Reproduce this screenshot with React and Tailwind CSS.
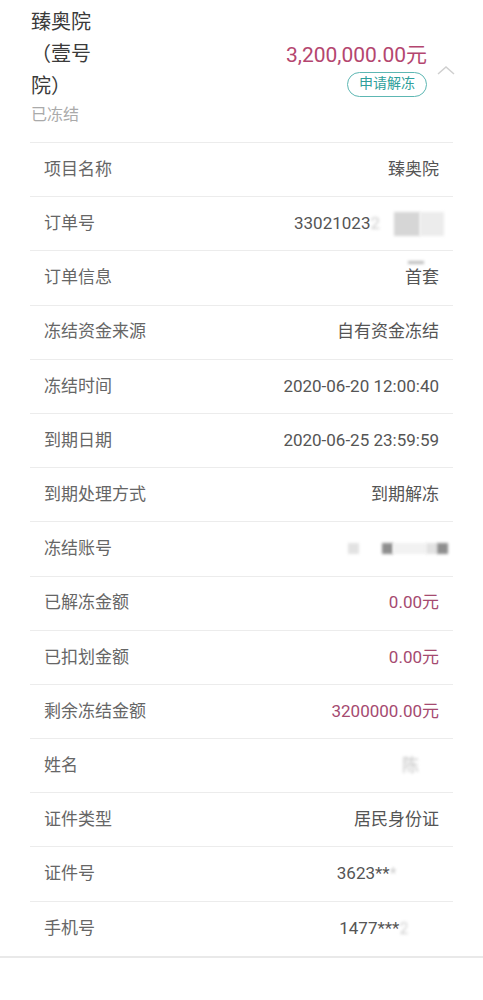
import React from "react";

const FONT = { fontFamily: 'Roboto, "Noto Sans CJK SC", sans-serif' };

function Blur({ className }) {
  return <span className={`inline-block blur-[1.5px] ${className}`} />;
}

const rows = [
  { label: "项目名称", value: "臻奥院" },
  {
    label: "订单号",
    value: (
      <span className="flex items-center">
        <span>33021023</span>
        <span className="text-[#ccc] blur-[1.5px]">2</span>
        <span className="ml-[14px] mr-[-5px] flex">
          <Blur className="w-[26px] h-[24px] bg-[#d6d6d6]" />
          <Blur className="w-[24px] h-[24px] bg-[#ececec]" />
        </span>
      </span>
    ),
  },
  {
    label: "订单信息",
    value: (
      <span className="relative">
        <Blur className="absolute left-[3px] -top-[6px] w-[16px] h-[3px] bg-[#bbb]" />
        首套
      </span>
    ),
  },
  { label: "冻结资金来源", value: "自有资金冻结" },
  { label: "冻结时间", value: "2020-06-20 12:00:40" },
  { label: "到期日期", value: "2020-06-25 23:59:59" },
  { label: "到期处理方式", value: "到期解冻" },
  {
    label: "冻结账号",
    value: (
      <span className="flex items-center mr-[-9px]">
        <Blur className="w-[11px] h-[11px] bg-[#e2e2e2]" />
        <Blur className="ml-[23px] w-[11px] h-[11px] bg-[#8e8e8e]" />
        <Blur className="w-[33px] h-[11px] bg-[#f2f2f2]" />
        <Blur className="w-[11px] h-[11px] bg-[#e2e2e2]" />
        <Blur className="w-[11px] h-[11px] bg-[#8e8e8e]" />
      </span>
    ),
  },
  { label: "已解冻金额", value: "0.00元", money: true },
  { label: "已扣划金额", value: "0.00元", money: true },
  { label: "剩余冻结金额", value: "3200000.00元", money: true },
  {
    label: "姓名",
    value: (
      <span className="flex items-center">
        <span className="text-[#c4c4c4] blur-[1.5px]">陈</span>
        <span className="w-[20px]" />
      </span>
    ),
  },
  { label: "证件类型", value: "居民身份证" },
  {
    label: "证件号",
    value: (
      <span className="flex items-center">
        <span>3623**</span>
        <span className="text-[#ccc] blur-[1px]">*</span>
        <span className="w-[42px] h-[20px] bg-white blur-[3px]" />
      </span>
    ),
  },
  {
    label: "手机号",
    value: (
      <span className="flex items-center">
        <span>1477***</span>
        <span className="text-[#ccc] blur-[1.5px]">2</span>
        <span className="w-[30px] h-[20px] bg-white blur-[3px]" />
      </span>
    ),
  },
];

export default function App() {
  return (
    <div className="min-h-[1000px] bg-white" style={FONT}>
      <div className="border-b-2 border-[#e9e9e9] px-[30px]">
        {/* Header */}
        <div className="flex items-start pt-[6px] pb-[16px] border-b border-[#ececec]">
          <div className="pl-[1px]">
            <div className="w-[70px] text-[20px] leading-[32px] text-[#3a3a3a]">臻奥院（壹号院）</div>
            <div className="mt-[2px] text-[16px] leading-[22px] text-[#aaa]">已冻结</div>
          </div>
          <div className="flex-1" />
          <div className="flex flex-col items-end pt-[34px]">
            <div className="text-[21px] leading-[30px] text-[#b4466f]">3,200,000.00元</div>
            <div className="mt-[2px] h-[25px] px-[11px] rounded-full border-[1.5px] border-[#5db7b3] text-[14px] leading-[21px] text-[#2f9f9b]">
              申请解冻
            </div>
          </div>
          <svg
            className="ml-[9px] mr-[-3px] mt-[58px]"
            width="20"
            height="12"
            viewBox="0 0 20 12"
            fill="none"
            stroke="#cfcfcf"
            strokeWidth="1.5"
          >
            <path d="M2 10 L10 3 L18 10" />
          </svg>
        </div>

        {/* Rows */}
        {rows.map((r, i) => (
          <div
            key={r.label}
            className={`flex items-center justify-between h-[54.2px] px-[14px] text-[17px] ${
              i < rows.length - 1 ? "border-b border-[#ececec]" : ""
            }`}
          >
            <span className="text-[#666]">{r.label}</span>
            <span className={r.money ? "text-[#a54a70]" : "text-[#555]"}>{r.value}</span>
          </div>
        ))}
      </div>
    </div>
  );
}
